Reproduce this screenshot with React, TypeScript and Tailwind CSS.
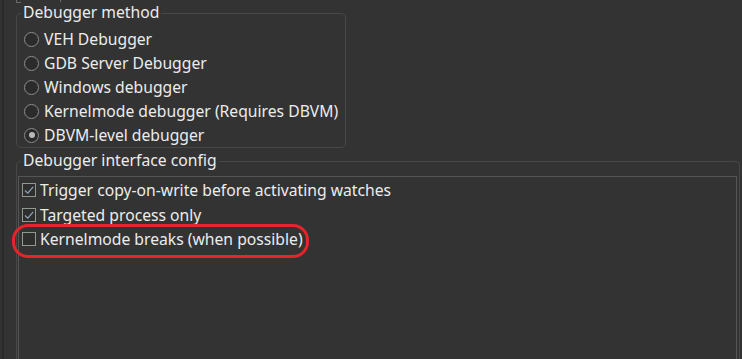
import React from 'react'

const radios = [
  { label: 'VEH Debugger', checked: false },
  { label: 'GDB Server Debugger', checked: false },
  { label: 'Windows debugger', checked: false },
  { label: 'Kernelmode debugger (Requires DBVM)', checked: false },
  { label: 'DBVM-level debugger', checked: true },
]

const checks = [
  { label: 'Trigger copy-on-write before activating watches', checked: true },
  { label: 'Targeted process only', checked: true },
  { label: 'Kernelmode breaks (when possible)', checked: false },
]

function Radio({ checked }: { checked: boolean }) {
  return (
    <span className="w-[15px] h-[15px] rounded-full border border-[#8c8c8c] bg-[#2b2b2b] flex items-center justify-center shrink-0">
      {checked && <span className="w-[6px] h-[6px] rounded-full bg-[#b8b8b8]" />}
    </span>
  )
}

function Check({ checked }: { checked: boolean }) {
  return (
    <span className="w-[14px] h-[14px] border border-[#8e9a8e] bg-[#2e2e2e] flex items-center justify-center shrink-0">
      {checked && (
        <svg width="12" height="12" viewBox="0 0 12 12">
          <path d="M2 6.5 L4.8 9.2 L10.2 2.8" fill="none" stroke="#8fa3b8" strokeWidth="1.2" />
        </svg>
      )}
    </span>
  )
}

export default function App() {
  return (
    <div
      className="w-[742px] h-[359px] bg-[#333333] text-[#ececec] text-[15.7px] relative overflow-hidden"
      style={{ fontFamily: '"Noto Sans", "Open Sans", sans-serif' }}
    >
      <div className="h-full border-l-[2px] border-[#2a2a2a] ml-[2px] pl-[10px] flex flex-col">
        {/* top control edge */}
        <div className="ml-[2px] w-[45px] h-[4px] border border-t-0 border-[#6a6a6a] -mt-[1px]" />

        {/* Debugger method */}
        <div className="relative mt-[10px] ml-[2px] w-[330px] h-[135px] border border-[#474747] rounded-[5px]">
          <span className="absolute -top-[12px] left-[4px] px-[2px] bg-[#333333] leading-[20px]">Debugger method</span>
          <div className="flex flex-col pt-[13px] pl-[7px]">
            {radios.map((r) => (
              <div key={r.label} className="flex items-center gap-[5px] h-[24px]">
                <Radio checked={r.checked} />
                <span className="leading-[20px]">{r.label}</span>
              </div>
            ))}
          </div>
        </div>

        {/* Debugger interface config */}
        <div className="relative mt-[13px] ml-[2px] w-[724px] flex-1 border border-b-0 border-[#474747] rounded-t-[5px] pl-[1px]">
          <span className="absolute -top-[12px] left-[4px] px-[2px] bg-[#333333] leading-[20px]">Debugger interface config</span>
          <div className="mt-[14px] mr-[2px] h-full border border-b-0 border-[#555555] pt-[1px] pl-[3px]">
            {checks.map((c) => (
              <div key={c.label} className="flex items-center gap-[4px] h-[24.5px]">
                <Check checked={c.checked} />
                <span className="leading-[20px]">{c.label}</span>
              </div>
            ))}
          </div>
        </div>
      </div>

      {/* red annotation */}
      <div className="absolute left-[12px] top-[224px] w-[297px] h-[34px] border-[3px] border-[#e8232a] rounded-[16px] pointer-events-none" />
    </div>
  )
}
